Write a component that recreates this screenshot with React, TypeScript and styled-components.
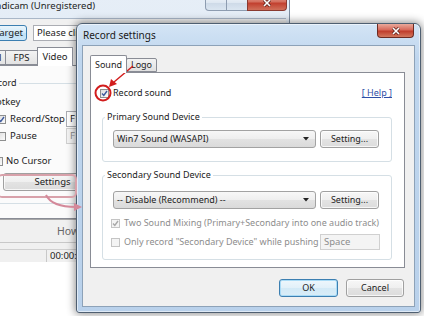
import React from "react";
import styled, { createGlobalStyle } from "styled-components";

const GlobalStyle = createGlobalStyle`
  html, body {
    margin: 0;
    padding: 0;
    background: #fff;
  }
`;

const Desktop = styled.div`
  position: relative;
  width: 424px;
  height: 316px;
  overflow: hidden;
  background: #fff;
  font-family: "Noto Sans", "Open Sans", sans-serif;
  font-size: 9px;
  line-height: 12px;
  color: #222;
`;

/* ---------- background Bandicam window ---------- */

const BgWindow = styled.div`
  position: absolute;
  left: -40px;
  top: -6px;
  width: 330px;
  height: 268px;
  box-sizing: border-box;
  display: flex;
  flex-direction: column;
  border-right: 1px solid #7d8da0;
  border-radius: 0 6px 0 0;
  background: linear-gradient(#e6eef7, #d6e3f0);
`;

const BgTitleBar = styled.div`
  height: 24px;
  flex: none;
  display: flex;
  align-items: center;
  padding-left: 24px;
  font-size: 9.5px;
  color: #1e1e1e;
`;

const CaptionGroup = styled.div`
  align-self: flex-start;
  margin: 1px 2px 0 auto;
  display: flex;
`;

const CaptionBtn = styled.div<{ $w: number; $close?: boolean }>`
  width: ${(p) => p.$w}px;
  height: 16px;
  box-sizing: border-box;
  display: flex;
  align-items: center;
  justify-content: center;
  border: 1px solid ${(p) => (p.$close ? "#8a3a30" : "#8d9cb0")};
  border-top: none;
  margin-left: -1px;
  border-radius: ${(p) => (p.$close ? "0 0 4px 0" : "0")};
  background: ${(p) =>
    p.$close
      ? "linear-gradient(#e6a69a, #d46f5e 45%, #c2402f 55%, #d0705a)"
      : "linear-gradient(#f3f7fb, #dfe8f2 50%, #cdd9e7 51%, #dbe6f1)"};
  &:first-child {
    border-radius: 0 0 0 4px;
  }
`;

const BgContent = styled.div`
  flex: 1;
  margin-right: 3px;
  display: flex;
  flex-direction: column;
  background: #f0f0f0;
  border-top: 1px solid #a9b7c8;
`;

const BgTopRow = styled.div`
  display: flex;
  gap: 6px;
  margin-top: 6px;
  height: 16px;
`;

const TargetButton = styled.div`
  width: 67px;
  box-sizing: border-box;
  display: flex;
  align-items: center;
  justify-content: flex-end;
  padding-right: 3px;
  border: 1px solid #3c7fb1;
  border-radius: 3px;
  background: linear-gradient(#eaf5fc, #d3ebf9 50%, #bfe1f6 51%, #cbe7f8);
  font-size: 9.5px;
`;

const TextField = styled.div<{ $w: number; $disabled?: boolean }>`
  width: ${(p) => p.$w}px;
  height: 16px;
  box-sizing: border-box;
  flex: none;
  display: flex;
  align-items: center;
  padding-left: 3px;
  overflow: hidden;
  white-space: nowrap;
  border: 1px solid ${(p) => (p.$disabled ? "#d0d0d0" : "#abadb3")};
  background: ${(p) => (p.$disabled ? "#f4f4f4" : "#fff")};
  color: ${(p) => (p.$disabled ? "#8d8d8d" : "#222")};
  font-size: 9.5px;
`;

const BgTabs = styled.div`
  display: flex;
  align-items: flex-end;
  margin-top: 7px;
  padding-left: 3px;
  height: 17px;
`;

const BgTab = styled.div<{ $active?: boolean; $w: number }>`
  width: ${(p) => p.$w}px;
  height: ${(p) => (p.$active ? 19 : 15)}px;
  box-sizing: border-box;
  display: flex;
  align-items: center;
  justify-content: center;
  margin-left: -1px;
  margin-bottom: ${(p) => (p.$active ? -1 : 0)}px;
  position: relative;
  z-index: ${(p) => (p.$active ? 1 : 0)};
  border: 1px solid #898c95;
  border-bottom: ${(p) => (p.$active ? "none" : "1px solid #898c95")};
  background: ${(p) => (p.$active ? "#fff" : "linear-gradient(#f3f3f3, #e3e3e3)")};
  font-size: 9.5px;
`;

const BgPanel = styled.div`
  height: 154px;
  box-sizing: border-box;
  margin-left: 2px;
  display: flex;
  flex-direction: column;
  border: 1px solid #898c95;
  background: #fbfbfb;
`;

const HotkeyRow = styled.div<{ $mt: number; $ml: number }>`
  display: grid;
  grid-template-columns: 9px 52px 40px;
  column-gap: 4px;
  align-items: center;
  height: 16px;
  margin: ${(p) => p.$mt}px 0 0 ${(p) => p.$ml}px;
  font-size: 9.5px;
`;

const PlainRow = styled.div<{ $mt: number; $ml: number; $gap?: number }>`
  display: flex;
  align-items: center;
  gap: ${(p) => p.$gap ?? 4}px;
  min-height: 12px;
  margin: ${(p) => p.$mt}px 0 0 ${(p) => p.$ml}px;
  font-size: 9.5px;
`;

const HowRow = styled.div`
  height: 22px;
  display: flex;
  align-items: center;
  padding-left: 97px;
  border-top: 1px solid #a8a8a8;
  border-bottom: 1px solid #c8c8c8;
  color: #666;
  font-size: 10.5px;
`;

const StatusBar = styled.div`
  margin-top: 6px;
  flex: 1;
  display: flex;
  border-top: 1px solid #cfcfcf;
  font-size: 9.5px;
`;

const StatusCell = styled.div<{ $w?: number }>`
  width: ${(p) => (p.$w ? `${p.$w}px` : "auto")};
  display: flex;
  align-items: center;
  padding-left: 3px;
  border-right: ${(p) => (p.$w ? "1px solid #c8c8c8" : "none")};
`;

/* ---------- Record settings dialog ---------- */

const Dialog = styled.div`
  position: absolute;
  left: 76px;
  top: 23px;
  width: 345px;
  height: 290px;
  box-sizing: border-box;
  display: flex;
  flex-direction: column;
  padding: 0 5px 5px;
  border: 1px solid #4f5f71;
  border-radius: 6px 6px 3px 3px;
  background: linear-gradient(180deg, #d3e4f5 0%, #bfd6ee 12%, #b9d1eb 100%);
  box-shadow: 0 0 9px 1px rgba(0, 0, 0, 0.45), inset 0 0 0 1px rgba(255, 255, 255, 0.55);
`;

const DialogTitleBar = styled.div`
  height: 21px;
  flex: none;
  display: flex;
  align-items: center;
  padding-left: 1px;
  font-size: 10px;
  color: #1a1a1a;
`;

const CloseButton = styled.div`
  align-self: flex-start;
  margin: 0 1px 0 auto;
  width: 37px;
  height: 14px;
  box-sizing: border-box;
  display: flex;
  align-items: center;
  justify-content: center;
  border: 1px solid #6d2b22;
  border-top: none;
  border-radius: 0 0 4px 4px;
  background: linear-gradient(#eaa99b, #d7695a 45%, #c03d2c 55%, #d2785e);
`;

const Client = styled.div`
  flex: 1;
  display: flex;
  flex-direction: column;
  padding: 0 9px 0 7px;
  border: 1px solid #8da2b8;
  background: #f0f0f0;
`;

const TabRow = styled.div`
  display: flex;
  align-items: flex-end;
  margin-top: 9px;
  padding-left: 1px;
  height: 17px;
`;

const Tab = styled.div<{ $active?: boolean; $w: number }>`
  width: ${(p) => p.$w}px;
  height: ${(p) => (p.$active ? 18 : 14)}px;
  box-sizing: border-box;
  display: flex;
  align-items: center;
  justify-content: center;
  margin-left: -1px;
  margin-bottom: ${(p) => (p.$active ? -1 : 0)}px;
  position: relative;
  z-index: ${(p) => (p.$active ? 1 : 0)};
  border: 1px solid #898c95;
  border-bottom: ${(p) => (p.$active ? "none" : "1px solid #898c95")};
  border-radius: 2px 2px 0 0;
  background: ${(p) => (p.$active ? "#fff" : "linear-gradient(#f3f3f3, #e0e0e0)")};
`;

const TabPanel = styled.div`
  height: 196px;
  box-sizing: border-box;
  display: flex;
  flex-direction: column;
  border: 1px solid #898c95;
  background: #fff;
`;

const TopRow = styled.div`
  display: flex;
  align-items: center;
  height: 20px;
  margin-top: 10px;
  padding: 0 12px 0 9px;
`;

const HelpLink = styled.a`
  margin-left: auto;
  color: #2f4fa6;
  text-decoration: underline;
`;

const GroupBox = styled.div<{ $m: string; $pb: number }>`
  margin: ${(p) => p.$m};
  padding-bottom: ${(p) => p.$pb}px;
  display: flex;
  flex-direction: column;
  border: 1px solid #d5dfe5;
  border-radius: 3px;
`;

const GroupLabel = styled.div<{ $ml?: number; $bg?: string }>`
  align-self: flex-start;
  margin: -7px 0 0 ${(p) => p.$ml ?? 2}px;
  padding: 0 2px;
  line-height: 12px;
  background: ${(p) => p.$bg ?? "#fff"};
`;

const ComboRow = styled.div<{ $mt: number }>`
  display: flex;
  gap: 4px;
  margin-top: ${(p) => p.$mt}px;
  padding-left: 10px;
`;

const Combo = styled.div`
  width: 203px;
  height: 18px;
  box-sizing: border-box;
  flex: none;
  display: flex;
  align-items: center;
  padding: 0 6px 0 3px;
  border: 1px solid #a2a2a2;
  border-radius: 3px;
  background: linear-gradient(#f7f7f7 0%, #eeeeee 50%, #e2e2e2 51%, #dadada 100%);
`;

const Button = styled.button<{ $w: number; $default?: boolean }>`
  width: ${(p) => p.$w}px;
  height: 18px;
  box-sizing: border-box;
  flex: none;
  padding: 0;
  font: inherit;
  color: #222;
  border: 1px solid ${(p) => (p.$default ? "#3c7fb1" : "#a0a0a0")};
  border-radius: 3px;
  background: ${(p) =>
    p.$default
      ? "linear-gradient(#eef7fc 0%, #e1f0f9 50%, #d2e9f6 51%, #d9edf8 100%)"
      : "linear-gradient(#f7f7f7 0%, #efefef 50%, #e3e3e3 51%, #dcdcdc 100%)"};
  box-shadow: ${(p) =>
    p.$default ? "inset 0 0 0 1px #a9dbf6" : "inset 0 0 0 1px rgba(255,255,255,0.75)"};
`;

const CheckRow = styled.div<{ $mt: number; $h: number; $disabled?: boolean }>`
  display: flex;
  align-items: center;
  height: ${(p) => p.$h}px;
  margin-top: ${(p) => p.$mt}px;
  padding: 0 11px 0 8px;
  color: ${(p) => (p.$disabled ? "#8d8d8d" : "#222")};
`;

const CheckLabel = styled.span`
  margin-left: 4px;
  white-space: nowrap;
`;

const Box = styled.span<{ $disabled?: boolean }>`
  width: 9px;
  height: 9px;
  box-sizing: border-box;
  flex: none;
  display: inline-flex;
  align-items: center;
  justify-content: center;
  border: 1px solid ${(p) => (p.$disabled ? "#c4c4c4" : "#8e8f8f")};
  background: ${(p) =>
    p.$disabled ? "#f4f4f4" : "linear-gradient(135deg, #dedede, #fbfbfb)"};
`;

const ButtonRow = styled.div`
  display: flex;
  justify-content: flex-end;
  gap: 8px;
  margin: 11px 1px 0 0;
`;

const Overlay = styled.svg`
  position: absolute;
  left: 0;
  top: 0;
  pointer-events: none;
`;

const CheckBox = ({ checked, disabled }: { checked?: boolean; disabled?: boolean }) => (
  <Box $disabled={disabled}>
    {checked && (
      <svg width="7" height="7" viewBox="0 0 7 7">
        <path
          d="M1 3.6 L2.8 5.5 L6 1"
          fill="none"
          stroke={disabled ? "#a8a8a8" : "#3d5a9e"}
          strokeWidth="1.4"
        />
      </svg>
    )}
  </Box>
);

const CloseX = () => (
  <svg width="10" height="8" viewBox="0 0 10 8">
    <path d="M2 1 L8 7 M8 1 L2 7" stroke="#5a2019" strokeWidth="3" />
    <path d="M2 1 L8 7 M8 1 L2 7" stroke="#fff" strokeWidth="1.6" />
  </svg>
);

const DropArrow = () => (
  <svg width="6" height="4" viewBox="0 0 6 4" style={{ marginLeft: "auto" }}>
    <path d="M0 0 H6 L3 3.5 Z" fill="#222" />
  </svg>
);

const Annotations = () => (
  <Overlay width="424" height="316" viewBox="0 0 424 316">
    <rect x="-2" y="175" width="78" height="22" rx="4" fill="none" stroke="#d8a1aa" strokeWidth="2" />
    <path d="M46 195 Q 52 207 76 207" fill="none" stroke="#d4899a" strokeWidth="2" />
    <path d="M74 203 L82 207 L74 211 Z" fill="#d4899a" />
    <circle cx="103" cy="93" r="7.5" fill="none" stroke="#d21d1d" strokeWidth="2" />
    <path d="M133 66 L114 82" stroke="#d21d1d" strokeWidth="1.4" />
    <path d="M109 87 L111 79 L117 84 Z" fill="#d21d1d" />
  </Overlay>
);

const App = () => {
  return (
    <Desktop>
      <GlobalStyle />

      <BgWindow>
        <BgTitleBar>
          Bandicam (Unregistered)
          <CaptionGroup>
            <CaptionBtn $w={22} />
            <CaptionBtn $w={22} />
            <CaptionBtn $w={40} $close>
              <CloseX />
            </CaptionBtn>
          </CaptionGroup>
        </BgTitleBar>
        <BgContent>
          <BgTopRow>
            <TargetButton>Target</TargetButton>
            <TextField $w={50}>Please click</TextField>
          </BgTopRow>
          <BgTabs>
            <BgTab $w={44}>General</BgTab>
            <BgTab $w={33}>FPS</BgTab>
            <BgTab $w={36} $active>
              Video
            </BgTab>
          </BgTabs>
          <BgPanel>
            <GroupBox $m="17px 0 0 12px" $pb={12}>
              <GroupLabel $ml={9} $bg="#fbfbfb">
                Record
              </GroupLabel>
              <PlainRow $mt={7} $ml={13}>
                Hotkey
              </PlainRow>
              <HotkeyRow $mt={3} $ml={21}>
                <CheckBox checked />
                <span>Record/Stop</span>
                <TextField $w={40}>F12</TextField>
              </HotkeyRow>
              <HotkeyRow $mt={1} $ml={21}>
                <CheckBox />
                <span>Pause</span>
                <TextField $w={40} $disabled>
                  F11
                </TextField>
              </HotkeyRow>
              <PlainRow $mt={11} $ml={18} $gap={3}>
                <CheckBox />
                No Cursor
              </PlainRow>
              <PlainRow $mt={6} $ml={27}>
                <Button $w={99}>Settings</Button>
              </PlainRow>
            </GroupBox>
          </BgPanel>
          <HowRow>How</HowRow>
          <StatusBar>
            <StatusCell $w={83}>REC</StatusCell>
            <StatusCell>00:00:00</StatusCell>
          </StatusBar>
        </BgContent>
      </BgWindow>

      <Dialog>
        <DialogTitleBar>
          Record settings
          <CloseButton>
            <CloseX />
          </CloseButton>
        </DialogTitleBar>
        <Client>
          <TabRow>
            <Tab $w={37} $active>
              Sound
            </Tab>
            <Tab $w={31}>Logo</Tab>
          </TabRow>
          <TabPanel>
            <TopRow>
              <CheckBox checked />
              <CheckLabel>Record sound</CheckLabel>
              <HelpLink>[ Help ]</HelpLink>
            </TopRow>

            <GroupBox $m="14px 12px 0 11px" $pb={13}>
              <GroupLabel>Primary Sound Device</GroupLabel>
              <ComboRow $mt={7}>
                <Combo>
                  Win7 Sound (WASAPI)
                  <DropArrow />
                </Combo>
                <Button $w={59}>Setting...</Button>
              </ComboRow>
            </GroupBox>

            <GroupBox $m="13px 12px 0 11px" $pb={9}>
              <GroupLabel>Secondary Sound Device</GroupLabel>
              <ComboRow $mt={10}>
                <Combo>
                  -- Disable (Recommend) --
                  <DropArrow />
                </Combo>
                <Button $w={59}>Setting...</Button>
              </ComboRow>
              <CheckRow $mt={7} $h={14} $disabled>
                <CheckBox checked disabled />
                <CheckLabel>Two Sound Mixing (Primary+Secondary into one audio track)</CheckLabel>
              </CheckRow>
              <CheckRow $mt={4} $h={16} $disabled>
                <CheckBox disabled />
                <CheckLabel>Only record "Secondary Device" while pushing</CheckLabel>
                <TextField $w={60} $disabled style={{ marginLeft: "auto" }}>
                  Space
                </TextField>
              </CheckRow>
            </GroupBox>
          </TabPanel>
          <ButtonRow>
            <Button $w={59} $default>
              OK
            </Button>
            <Button $w={58}>Cancel</Button>
          </ButtonRow>
        </Client>
      </Dialog>

      <Annotations />
    </Desktop>
  );
};

export default App;
